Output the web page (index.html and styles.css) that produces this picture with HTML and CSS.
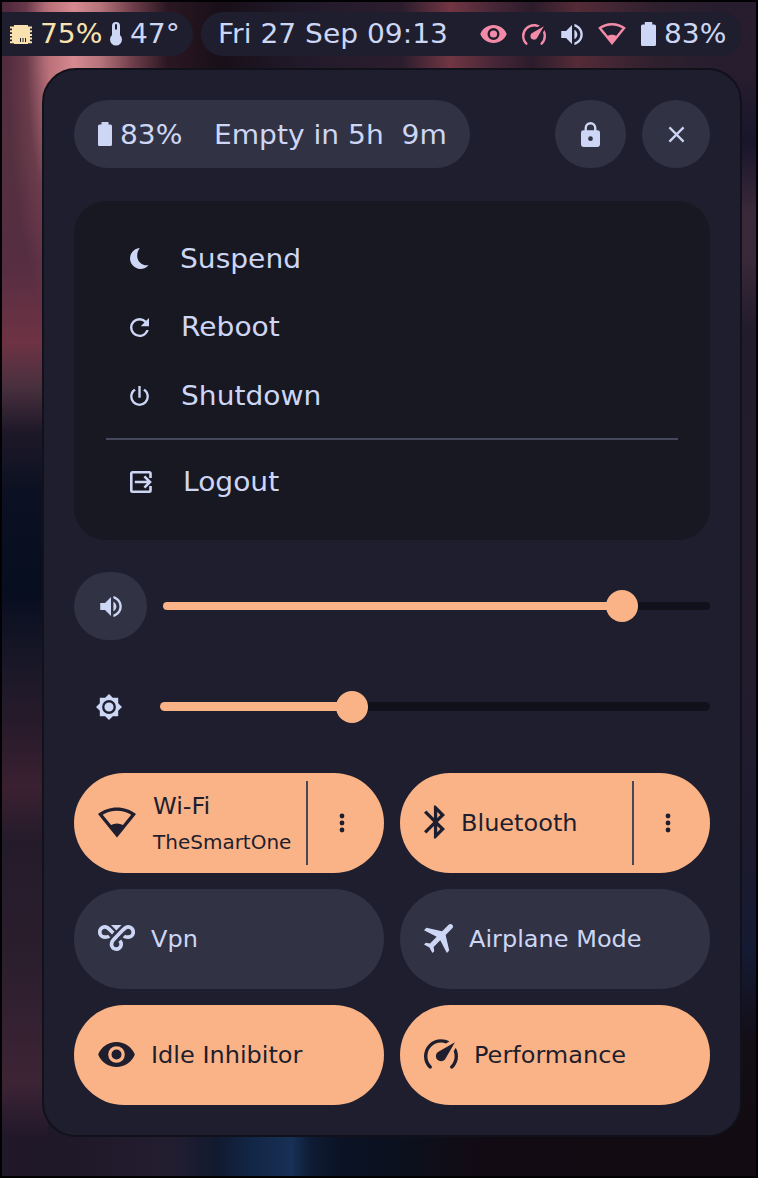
FILE: index.html
```
<!DOCTYPE html>
<html lang="en">
<head>
<meta charset="utf-8">
<title>Control Center</title>
<link rel="stylesheet" href="styles.css">
</head>
<body>
<svg class="defs" aria-hidden="true">
  <symbol id="eye" viewBox="1 4.5 22 15"><path d="M12 9a3 3 0 0 0-3 3 3 3 0 0 0 3 3 3 3 0 0 0 3-3 3 3 0 0 0-3-3m0 8a5 5 0 0 1-5-5 5 5 0 0 1 5-5 5 5 0 0 1 5 5 5 5 0 0 1-5 5m0-12.5C7 4.5 2.73 7.61 1 12c1.73 4.39 6 7.5 11 7.5s9.27-3.11 11-7.5c-1.73-4.39-6-7.5-11-7.5z"/></symbol>
  <symbol id="gauge" viewBox="2 3 20 17.4"><path d="M12 16a3 3 0 0 1-3-3c0-1.12.61-2.1 1.5-2.61l9.71-5.62-5.53 9.58c-.5.98-1.51 1.65-2.68 1.65m0-13c1.81 0 3.5.5 4.97 1.32l-2.1 1.21C14 5.19 13 5 12 5a8 8 0 0 0-8 8c0 2.21.89 4.21 2.34 5.65h.01c.39.39.39 1.02 0 1.41-.39.39-1.03.39-1.42.01A9.97 9.97 0 0 1 2 13 10 10 0 0 1 12 3m10 10c0 2.76-1.12 5.26-2.93 7.07-.39.38-1.02.38-1.41-.01a1 1 0 0 1 0-1.41A7.95 7.95 0 0 0 20 13c0-1-.19-2-.54-2.88l1.21-2.1C21.5 9.5 22 11.18 22 13"/></symbol>
  <symbol id="volume" viewBox="3 3.23 18 17.54"><path d="M14 3.23v2.06c2.89.86 5 3.54 5 6.71s-2.11 5.84-5 6.7v2.07c4-.91 7-4.49 7-8.77s-3-7.86-7-8.77M16.5 12c0-1.77-1-3.29-2.5-4.03V16c1.5-.71 2.5-2.24 2.5-4M3 9v6h4l5 5V4L7 9z"/></symbol>
  <symbol id="wifi" viewBox=".38 3 23.27 18.5"><path d="M12 3C7.79 3 3.7 4.41.38 7 4.41 12.06 7.89 16.37 12 21.5c4.08-5.08 8.24-10.26 11.65-14.5C20.32 4.41 16.22 3 12 3m0 2c3.07 0 6.09.86 8.71 2.45l-5.1 6.36c-.97-.51-2.25-.97-3.61-.97s-2.61.45-3.6.96L3.27 7.44C5.91 5.85 8.93 5 12 5"/></symbol>
  <symbol id="battery" viewBox="6 2 12 20" preserveAspectRatio="none"><path d="M16.67 4H15V2H9v2H7.33A1.33 1.33 0 0 0 6 5.33v15.34C6 21.4 6.6 22 7.33 22h9.34A1.33 1.33 0 0 0 18 20.67V5.33C18 4.6 17.4 4 16.67 4"/></symbol>
  <symbol id="dots" viewBox="0 0 6 20"><circle cx="3" cy="3" r="2.4"/><circle cx="3" cy="10" r="2.4"/><circle cx="3" cy="17" r="2.4"/></symbol>
</svg>

<div class="desktop">
  <header class="bar">
    <div class="bar-group stats">
      <svg class="icon chip" viewBox="0 0 22 19"><path fill-rule="evenodd" d="M4 0h14v1.500h4v2h-2v1.700h2v2h-2v1.700h2v2h-2v1.700h2v2h-2v1.700h2v2h-4V19H4v-.7H0v-2h2v-1.700H0v-2h2v-1.700H0v-2h2V7.200H0v-2h2V3.500H0v-2h4zM10 13v4h1v-4zM12.500 13v4h1v-4zM15 13v4h1v-4z"/></svg>
      <span class="cpu">75%</span>
      <svg class="icon thermo" viewBox="0 0 12 24"><path fill-rule="evenodd" d="M2 4a4 4 0 0 1 8 0v9a6 6 0 1 1-8 0zM5 3v4.500h2V3a1 1 0 0 0-2 0z"/></svg>
      <span>47°</span>
    </div>
    <div class="bar-group tray">
      <span class="date">Fri 27 Sep 09:13</span>
      <svg class="icon alert bar-eye"><use href="#eye"/></svg>
      <svg class="icon alert bar-gauge"><use href="#gauge"/></svg>
      <svg class="icon bar-volume"><use href="#volume"/></svg>
      <svg class="icon alert bar-wifi"><use href="#wifi"/></svg>
      <svg class="icon bar-battery"><use href="#battery"/></svg>
      <span class="charge">83%</span>
    </div>
  </header>

  <main class="panel">
    <section class="top-row">
      <div class="battery-pill">
        <svg class="icon pill-battery"><use href="#battery"/></svg>
        <span class="percent">83%</span>
        <span class="remaining">Empty in 5h  9m</span>
      </div>
      <button class="round lock-button" aria-label="Lock"><svg class="icon lock" viewBox="4 1 16 21"><path d="M12 17a2 2 0 0 0 2-2 2 2 0 0 0-2-2 2 2 0 0 0-2 2 2 2 0 0 0 2 2m6-9a2 2 0 0 1 2 2v10a2 2 0 0 1-2 2H6a2 2 0 0 1-2-2V10a2 2 0 0 1 2-2h1V6a5 5 0 0 1 5-5 5 5 0 0 1 5 5v2zm-6-5a3 3 0 0 0-3 3v2h6V6a3 3 0 0 0-3-3"/></svg></button>
      <button class="round close-button" aria-label="Close"><svg class="icon line close" viewBox="0 0 18 18"><path d="M1.500 1.500l15 15M16.500 1.500l-15 15"/></svg></button>
    </section>

    <section class="menu">
      <div class="menu-item"><svg class="icon moon" viewBox="0 0 19 21"><path d="M9.800 0A10.500 10.500 0 1 0 18.600 17.200C12.500 18.300 7.200 13.800 7.200 7.800 7.200 4.700 8.200 2 9.800 0z"/></svg><span>Suspend</span></div>
      <div class="menu-item"><svg class="icon reboot" viewBox="4 4 16 16"><path d="M17.650 6.350A7.960 7.960 0 0 0 12 4a8 8 0 0 0-8 8 8 8 0 0 0 8 8c3.730 0 6.840-2.550 7.730-6h-2.080A5.990 5.990 0 0 1 12 18a6 6 0 0 1-6-6 6 6 0 0 1 6-6c1.660 0 3.140.69 4.220 1.780L13 11h7V4z"/></svg><span>Reboot</span></div>
      <div class="menu-item"><svg class="icon power" viewBox="4 3 16 17"><path d="m16.560 5.440-1.450 1.450A5.970 5.970 0 0 1 18 12a6 6 0 0 1-6 6 6 6 0 0 1-6-6c0-2.170 1.160-4.060 2.880-5.120L7.440 5.440A7.960 7.960 0 0 0 4 12a8 8 0 0 0 8 8 8 8 0 0 0 8-8c0-2.720-1.360-5.120-3.440-6.560M13 3h-2v10h2"/></svg><span>Shutdown</span></div>
      <div class="menu-item logout-item"><svg class="icon line logout" viewBox="0 0 22 22"><path d="M20.500 7V2.500q0-1.200-1.200-1.200H2.500q-1.200 0-1.200 1.200V19.500q0 1.200 1.200 1.200H19.300q1.200 0 1.200-1.200V15M4.800 11H20M14.400 5.400L20 11L14.400 16.600"/></svg><span>Logout</span></div>
    </section>

    <section class="slider-row volume-row">
      <button class="round volume-button" aria-label="Mute"><svg class="icon row-volume"><use href="#volume"/></svg></button>
      <div class="track"><div class="fill" style="width:459px"></div><div class="knob"></div></div>
    </section>
    <section class="slider-row bright-row">
      <svg class="icon bright" viewBox=".69 .69 22.620 22.620"><path d="M12 8a4 4 0 0 0-4 4 4 4 0 0 0 4 4 4 4 0 0 0 4-4 4 4 0 0 0-4-4m0 10a6 6 0 0 1-6-6 6 6 0 0 1 6-6 6 6 0 0 1 6 6 6 6 0 0 1-6 6m8-9.310V4h-4.690L12 .69 8.690 4H4v4.690L.69 12 4 15.310V20h4.690L12 23.310 15.310 20H20v-4.690L23.310 12z"/></svg>
      <div class="track"><div class="fill" style="width:192px"></div><div class="knob"></div></div>
    </section>

    <section class="tiles">
      <div class="tile on">
        <svg class="icon tile-wifi"><use href="#wifi"/></svg>
        <div class="labels"><span>Wi-Fi</span><small>TheSmartOne</small></div>
        <div class="more"><svg class="icon dots"><use href="#dots"/></svg></div>
      </div>
      <div class="tile on">
        <svg class="icon bluetooth" viewBox="5 2 12.710 20"><path d="m14.880 16.290-1.880 1.880v-3.760m0-8.580 1.880 1.880-1.880 1.880m4.710-1.880L12 2h-1v7.580L6.410 5 5 6.410 10.590 12 5 17.580 6.410 19 11 14.410V22h1l5.710-5.710-4.300-4.290z"/></svg>
        <span>Bluetooth</span>
        <div class="more"><svg class="icon dots"><use href="#dots"/></svg></div>
      </div>
      <div class="tile">
        <svg class="icon line vpn" viewBox="0 0 37 26"><path d="M11.200 11.200C10 12.200 8.400 12.200 6.900 12.200A5.150 5.150 0 0 1 6.900 1.900C10.500 1.900 11.500 4.700 15.300 8M25.800 11.200C27 12.200 28.600 12.200 30.100 12.200A5.150 5.150 0 0 0 30.100 1.900C26.500 1.900 25.300 5 15.600 14.600C11.600 19 14 24.100 18.400 24.100C22.700 24.100 24.700 19 21.800 15.600"/><path class="solid" d="M13 0h10.600l-5.300 5.600z"/></svg>
        <span>Vpn</span>
      </div>
      <div class="tile">
        <svg class="icon airplane" viewBox="3.940 3.470 17.060 17.060"><path d="M20.560 3.910c.59.59.59 1.540 0 2.120l-3.890 3.890 2.120 9.190-1.410 1.420-3.880-7.430L9.600 17l.36 2.470-1.070 1.060-1.760-3.180-3.190-1.770L5 14.500l2.500.37L11.370 11 3.940 7.090l1.420-1.410 9.190 2.120 3.890-3.890c.56-.58 1.560-.58 2.120 0z"/></svg>
        <span>Airplane Mode</span>
      </div>
      <div class="tile on">
        <svg class="icon tile-eye"><use href="#eye"/></svg>
        <span>Idle Inhibitor</span>
      </div>
      <div class="tile on">
        <svg class="icon tile-gauge"><use href="#gauge"/></svg>
        <span>Performance</span>
      </div>
    </section>
  </main>
</div>
</body>
</html>
```

FILE: styles.css
```
* { box-sizing: border-box; }

body {
  margin: 0;
  background: #000;
  color: #cdd6f4;
  font: 28.1px/32px "DejaVu Sans", sans-serif;
}

button { border: 0; padding: 0; color: inherit; font: inherit; }

.defs { position: absolute; width: 0; height: 0; }

.icon { display: block; flex: none; fill: currentColor; }
.line { fill: none; stroke: currentColor; stroke-width: 2.6; }
.solid { fill: currentColor; stroke: none; }

.desktop {
  width: 758px;
  height: 1178px;
  padding-top: 10px;
  border: 2px solid #020204;
  overflow: hidden;
  background:
    radial-gradient(ellipse 62px 300px at 66px 30px, rgba(214, 137, 145, .95) 0, rgba(207, 128, 137, .75) 38%, rgba(160, 90, 102, .3) 68%, rgba(110, 60, 75, 0) 100%) 0 0 / 46px 400px no-repeat,
    linear-gradient(180deg, #50293d 0, #54303f 150px, #562d41 260px, #6e3344 340px, #49303e 385px, #1e1828 430px, #0b1122 490px, #070e20 590px, #1b1828 670px, #291b2b 730px, #3a2031 785px, #241b2a 840px, #2b1e2d 960px, #3d2435 1080px, #21182a 1135px) 0 0 / 46px 1135px no-repeat,
    linear-gradient(90deg, #50293d 0, #603447 20px, #b97078 46px, #d68991 72px, #b6747b 98px, #703f4b 130px, #2b1722 165px, #180f18 220px, #211a2a 300px, #2c1d2e 400px, #713642 448px, #492738 490px, #2c1c2b 530px, #552b37 575px, #30202e 650px, #251d2e 720px) 0 0 / 706px 90px no-repeat,
    linear-gradient(180deg, #271d2e 70px, #18152b 140px, #3a2939 210px, #382838 260px, #211b2c 330px, #241c2d 620px, #1d1a2d 840px, #141a33 950px, #130d16 1040px, #120b11 1135px) 100% 0 / 50px 1135px no-repeat,
    linear-gradient(90deg, #21182a 0, #1e1828 60px, #231d30 170px, #111a30 215px, #122544 245px, #173055 290px, #0f1c35 308px, #0a1224 340px, #0c101d 410px, #130b13 480px, #120b11 756px) 0 100% / 100% 60px no-repeat;
}

.bar { display: flex; gap: 8px; height: 44px; }
.bar-group { display: flex; align-items: center; height: 44px; background: #1e1e2e; white-space: nowrap; }
.bar-group span { flex: none; }
.bar-group span, .battery-pill span, .menu-item span { transform: scaleY(.96); }
.stats { width: 191px; padding-left: 8px; border-radius: 0 22px 22px 0; }
.cpu { width: 67px; margin-left: 8px; }
.chip { width: 22px; height: 19px; }
.chip, .cpu { color: #f9e2af; }
.thermo { width: 12px; height: 24px; margin: 0 8px 0 3px; }
.tray { width: 541px; padding-left: 17px; border-radius: 22px; }
.date { width: 262px; }
.alert { color: #f38ba8; }
.bar-eye { width: 27px; height: 18px; }
.bar-gauge { width: 24px; height: 21px; margin-left: 15px; }
.bar-volume { width: 22px; height: 21px; margin-left: 15px; }
.bar-wifi { width: 28px; height: 22px; margin-left: 15px; }
.bar-battery { width: 15px; height: 24px; margin-left: 15px; }
.charge { margin-left: 8px; }

.panel {
  width: 700px;
  height: 1069px;
  margin: 12px 0 0 40px;
  padding: 30px;
  border: 2px solid #11111b;
  border-radius: 34px;
  background: #1e1e2e;
}

.top-row { display: flex; align-items: center; height: 68px; }
.battery-pill {
  display: flex;
  align-items: center;
  width: 396px;
  height: 68px;
  padding-left: 24px;
  border-radius: 34px;
  background: #313244;
  white-space: pre;
}
.battery-pill span { padding-top: 1px; }
.pill-battery { width: 14px; height: 24px; }
.percent { width: 94px; margin-left: 8px; }
.round { display: flex; align-items: center; justify-content: center; height: 68px; border-radius: 34px; background: #313244; }
.lock-button { width: 71px; margin: 0 16px 0 auto; }
.close-button { width: 68px; }
.lock { width: 19px; height: 25px; }
.close { width: 17px; height: 17px; stroke-width: 2.4; }

.menu { height: 339.5px; margin-top: 32.5px; padding: 24px 32px; border-radius: 32px; background: #181822; }
.menu-item { display: flex; align-items: center; height: 68.5px; padding-left: 24px; }
.menu-item span { margin-left: 32px; }
.menu-item .moon + span { margin-left: 31px; }
.moon { width: 19px; height: 21px; }
.reboot { width: 19px; height: 19px; }
.power { width: 19px; height: 20px; }
.logout { width: 22px; height: 22px; }
.menu-item .logout + span { margin-left: 31px; }
.logout-item { height: 86px; margin-top: 7.5px; border-top: 2px solid #45475a; }

.slider-row { display: flex; align-items: center; height: 68px; }
.volume-row { gap: 16px; margin-top: 32px; }
.volume-button { width: 73px; }
.row-volume { width: 22px; height: 21px; }
.bright-row { margin-top: 32.5px; padding-left: 22px; gap: 38px; }
.bright { width: 26px; height: 26px; }
.track { display: flex; align-items: center; flex: 1; height: 8.5px; border-radius: 4.5px; background: #11111b; }
.fill { height: 8.5px; border-radius: 4.5px; background: #fab387; }
.knob { width: 32px; height: 32px; margin-left: -16px; border-radius: 50%; background: #fab387; }

.tiles { display: grid; grid-template-columns: 310px 310px; grid-auto-rows: 100px; gap: 16px; margin-top: 32.5px; font-size: 24px; }
.tile { display: flex; align-items: center; gap: 16px; padding-left: 24px; border-radius: 50px; background: #313244; white-space: nowrap; }
.tile.on { background: #fab387; color: #1e1e2e; }
.tile span { transform: scaleY(.98); }
.tile > .icon { margin-bottom: 2px; }
.labels { display: flex; flex-direction: column; gap: 4px; padding-top: 2px; margin: 0 -4px 0 1px; }
.labels small { font-size: 20px; }
.more { display: flex; flex: none; align-items: center; justify-content: center; width: 78px; height: 84px; margin-left: auto; padding-right: 9px; border-left: 2px solid #45475a; }
.dots { width: 6px; height: 20px; }
.tile-wifi { width: 38px; height: 31px; }
.bluetooth { width: 21px; height: 34px; }
.vpn { width: 37px; height: 26px; stroke-width: 3.7; }
.airplane { width: 29px; height: 29px; }
.tile-eye { width: 37px; height: 25px; }
.tile-gauge { width: 34px; height: 30px; }
```
